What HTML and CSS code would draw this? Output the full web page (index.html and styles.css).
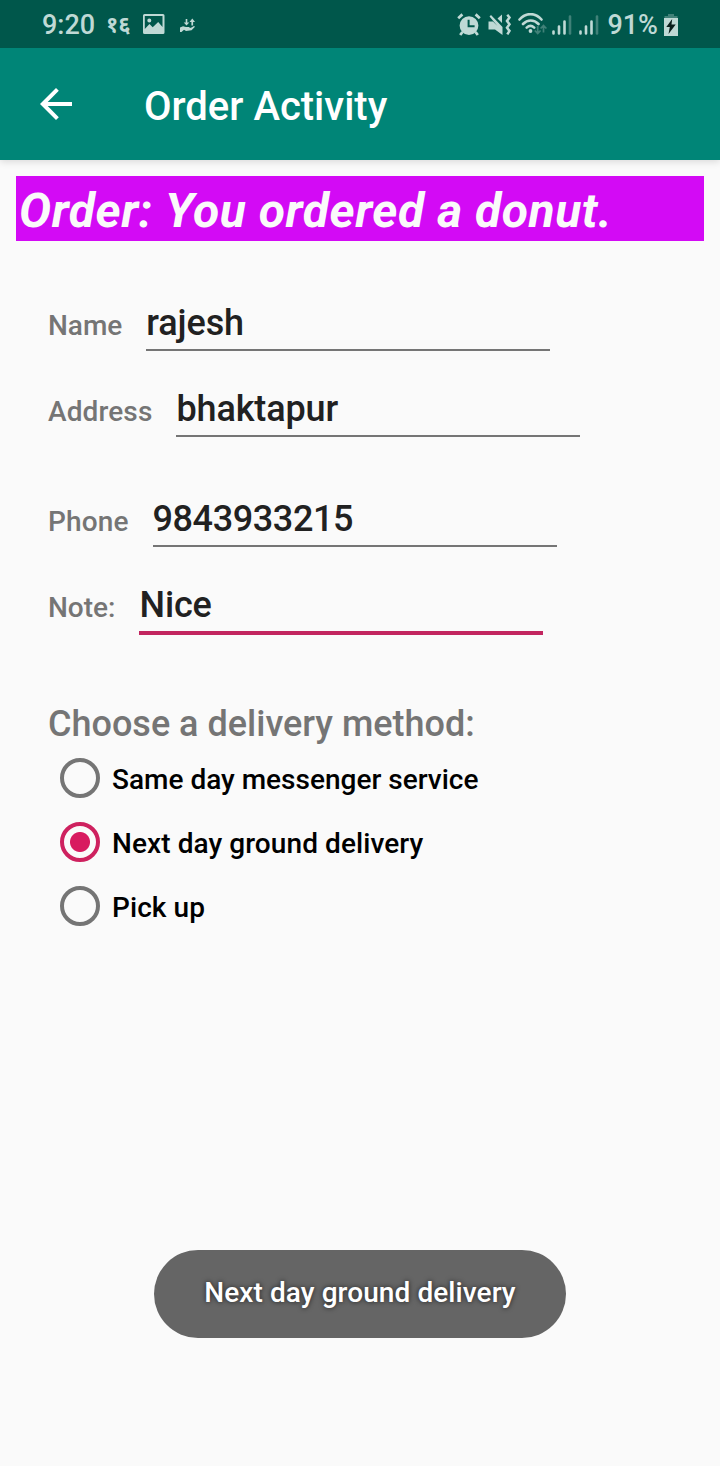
FILE: index.html
```
<!DOCTYPE html>
<html lang="en">
<head>
<meta charset="utf-8">
<title>Order Activity</title>
<link rel="stylesheet" href="styles.css">
</head>
<body>
<header class="top">
  <div class="status">
    <span class="clock">9:20</span>
    <span class="date">१६</span>
    <svg class="icon picture" width="22" height="20" viewBox="0 0 22 20"><path fill-rule="evenodd" d="M1.500 0h18.500a1.500 1.500 0 0 1 1.500 1.500v17a1.500 1.500 0 0 1-1.500 1.500H1.500A1.500 1.500 0 0 1 0 18.500v-17A1.500 1.500 0 0 1 1.500 0zM1.800 2v13l4.700-5 3.200 3.200L15.200 8l4.300 5V2zM6.300 4.500a2 2 0 1 1 0 4 2 2 0 0 1 0-4z"/></svg>
    <svg class="icon data" width="16" height="15" viewBox="0 0 16 15"><path d="M5.700 1h1.600v3.500h2L6.500 7.500 3.700 4.500h2zM11.400 7.500V4H9.500l2.800-3.500L15 4h-1.900v3.500zM0 9.500l3-1.300 3 .8h3.500v1.500H6l5-.7L14 8l1 .8-3.500 3.400-5.500.8-2-1.200-2.500 2.200H0z"/></svg>
    <div class="system">
      <svg class="icon" width="24" height="24" viewBox="0 0 24 24"><path fill-rule="evenodd" d="M12 3.200a9.400 9.400 0 1 1 0 18.800 9.400 9.400 0 0 1 0-18.800zM10.600 6.800v7.400h7v-2h-5V6.800z"/><path class="line heavy" d="M1.200 5.200 5.400 1.400M22.800 5.200 18.600 1.400M5.500 19 3.200 22M18.500 19l2.300 3"/></svg>
      <svg class="icon mute" width="24" height="24" viewBox="0 0 24 24"><path d="M.5 8.500H5l9.500 9.500v4L7 16.500H.5zM14 1.500V10L9.500 5.500zM1.500 3.500 3 2l11.500 12v5z"/><path class="line" d="M19.300 1.800l2.200 2.700L19 8l2.500 3.200-2.500 3.500 2.500 3.200-2.200 3.500"/></svg>
      <svg class="icon wifi" width="30" height="24" viewBox="0 0 30 24"><path class="arc" d="M1.500 6.500C8-.7 17-.7 23.500 6.500M5 11c4.500-4.700 11-4.700 15.500 0M8.700 14.600c2.300-2.200 5.200-2.200 7.500 0"/><circle cx="12.500" cy="18" r="1.900"/><path class="thin" d="M19.700 13v7M16.800 17.500l2.900 3 2.900-3M25.500 19.500v-7M22.600 15.500l2.900-3 2.900 3"/></svg>
      <svg class="icon signal" width="20" height="20" viewBox="0 0 20 20"><path class="bars" d="M1.500 16.500v2M7 11.500v7M12.500 6.500v12"/><path class="bars dim" d="M18 1.500v17"/></svg>
      <svg class="icon signal second" width="20" height="20" viewBox="0 0 20 20"><path class="bars" d="M1.500 16.500v2M7 11.500v7M12.500 6.500v12"/><path class="bars dim" d="M18 1.500v17"/></svg>
      <span class="percent">91%</span>
      <svg class="icon battery" width="14" height="22" viewBox="0 0 14 22"><path class="cap" d="M4 0h6v2h3.500v2H.5V2H4z"/><path d="M0 4h14v18H0z"/><path class="bolt" d="M8.200 5 2.300 13h3.500l-1.300 7 7.200-9.500H7.500z"/></svg>
    </div>
  </div>
  <div class="appbar">
    <svg class="back" width="32" height="32" viewBox="0 0 32 32"><path d="M32 14H7.700L18.800 2.800 16 0 0 16l16 16 2.800-2.800L7.700 18H32z"/></svg>
    <h1 class="title">Order Activity</h1>
  </div>
</header>
<main class="content">
  <div class="banner">Order: You ordered a donut.</div>
  <form class="form">
    <div class="row"><span class="label">Name</span><span class="field">rajesh</span></div>
    <div class="row"><span class="label spaced">Address</span><span class="field">bhaktapur</span></div>
    <div class="row phone"><span class="label spaced">Phone</span><span class="field number">9843933215</span></div>
    <div class="row"><span class="label">Note:</span><span class="field focused">Nice</span></div>
    <h2 class="heading">Choose a delivery method:</h2>
    <div class="option"><span class="radio"></span><span class="option-text">Same day messenger service</span></div>
    <div class="option"><span class="radio checked"></span><span class="option-text delivery">Next day ground delivery</span></div>
    <div class="option"><span class="radio"></span><span class="option-text delivery">Pick up</span></div>
  </form>
</main>
<div class="toast delivery">Next day ground delivery</div>
</body>
</html>
```
FILE: styles.css
```
* { box-sizing: border-box; }
body {
  margin: 0;
  width: 720px;
  height: 1466px;
  overflow: hidden;
  position: relative;
  background: #fafafa;
  font-family: Roboto, "Noto Sans", sans-serif;
  font-weight: 500;
}
.top {
  background: #008577;
  box-shadow: 0 2px 7px rgba(0, 0, 0, .13);
}
.status {
  height: 48px;
  padding: 2px 42px 0;
  display: flex;
  align-items: center;
  background: #00574b;
  color: #bfd9d5;
  font-size: 27px;
  line-height: 46px;
  white-space: nowrap;
}
.clock { width: 64px; }
.date { width: 37px; font-size: 22px; font-weight: 700; }
.picture { margin-bottom: 2px; }
.icon { flex: none; fill: #bfd9d5; }
.data { margin-left: 15px; }
.system { margin-left: auto; display: flex; align-items: center; }
.line, .arc, .thin, .bars { fill: none; stroke: #bfd9d5; stroke-width: 2.5; }
.heavy { stroke-width: 2.8; }
.arc { stroke-width: 2.6; stroke-linecap: round; }
.thin { stroke: #408178; stroke-width: 1.7; }
.bars { stroke-linecap: round; stroke-width: 2.6; }
.dim { stroke: #408178; }
.mute { margin-left: 7px; }
.wifi { margin-left: 6px; }
.signal { margin-left: 4px; }
.second { margin-left: 7px; }
.percent { margin-left: 8px; }
.battery { margin-left: 6px; margin-bottom: 1px; }
.cap { fill: #408178; }
.bolt { fill: #0b1f1c; }
.appbar {
  height: 112px;
  padding-left: 40px;
  display: flex;
  align-items: center;
}
.back { fill: #fff; }
.title {
  margin: 6px 0 0 72px;
  color: #fff;
  font-size: 40px;
  line-height: 48px;
  font-weight: 500;
}
.content { padding: 16px 16px 0; }
.banner {
  height: 65px;
  padding: 5px 3px 0;
  background: #d30af5;
  color: #fafafa;
  font-size: 48px;
  line-height: 60px;
  letter-spacing: .55px;
  font-weight: 700;
  font-style: italic;
  white-space: nowrap;
}
.form { padding: 61px 32px 0; }
.row {
  height: 49px;
  margin-bottom: 37px;
  display: flex;
  align-items: baseline;
  gap: 24px;
}
.phone { margin-top: 61px; }
.label { font-size: 28px; line-height: 33px; color: #757575; }
.spaced { letter-spacing: .12px; }
.field {
  width: 404px;
  padding-bottom: 5px;
  border-bottom: 2px solid #757575;
  color: #212121;
  font-size: 36px;
  line-height: 42px;
  letter-spacing: -.12px;
}
.number { letter-spacing: -.4px; }
.focused { border-bottom: 4px solid #c2255f; }
.heading {
  margin: 70px 0 0;
  color: #757575;
  font-size: 36px;
  line-height: 43px;
  font-weight: 500;
}
.option {
  height: 64px;
  padding-left: 12px;
  display: flex;
  align-items: center;
  gap: 12px;
  font-size: 28px;
  line-height: 33px;
  color: #000;
}
.option-text { padding-top: 3px; }
.delivery { letter-spacing: .08px; }
.radio {
  width: 40px;
  height: 40px;
  border: 4px solid #757575;
  border-radius: 50%;
}
.checked {
  border-color: #ce215f;
  background: radial-gradient(circle, #d81b60 9.5px, transparent 10.5px);
}
.toast {
  position: absolute;
  left: 154px;
  top: 1250px;
  width: 412px;
  height: 88px;
  border-radius: 44px;
  background: #656565;
  color: #fff;
  font-size: 28px;
  line-height: 85px;
  text-align: center;
  text-shadow: 0 0 5px rgba(0, 0, 0, .7);
}
```
